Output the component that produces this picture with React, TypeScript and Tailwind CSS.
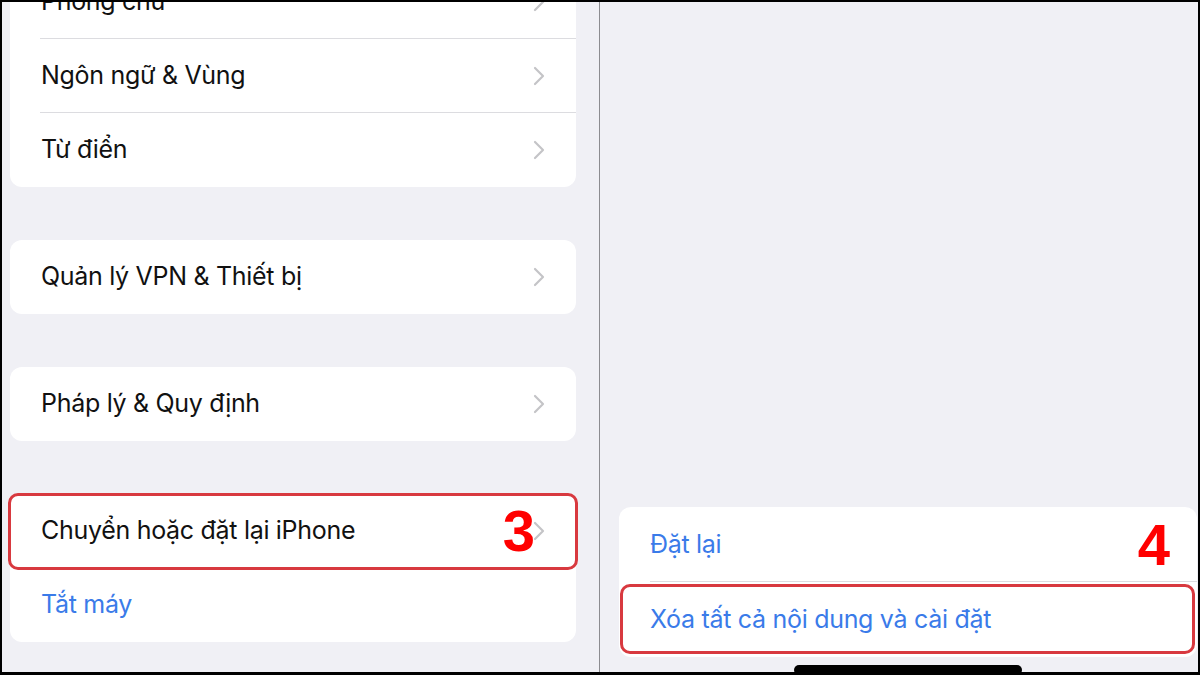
import React from "react";

const Chevron = () => (
  <svg width="12" height="20" viewBox="0 0 12 20" fill="none" className="shrink-0">
    <path d="M2 2L10 10L2 18" stroke="#c4c4c7" strokeWidth="2.2" strokeLinecap="round" strokeLinejoin="round" />
  </svg>
);

function Row({ label, blue, chevron = true, divider = false }: { label: string; blue?: boolean; chevron?: boolean; divider?: boolean }) {
  return (
    <div className="relative h-[74px] flex items-center pl-[31px] pr-[31px]">
      <span className={`text-[25px] tracking-[-0.3px] ${blue ? "text-[#3a7be9]" : "text-[#111]"} flex-1`}>{label}</span>
      {chevron && <Chevron />}
      {divider && <div className="absolute left-[30px] right-0 bottom-0 h-[1px] bg-[#dcdce0]" />}
    </div>
  );
}

const Mark = ({ n, right }: { n: string; right: string }) => (
  <span
    className={`absolute ${right} top-1/2 -translate-y-1/2 text-[58px] leading-none font-bold text-[#ff0000]`}
    style={{ fontFamily: '"Liberation Sans", Arial, sans-serif' }}
  >
    {n}
  </span>
);

export default function App() {
  return (
    <div
      className="w-[1200px] h-[675px] bg-black pt-[2px] pl-[2px] pr-[2px] pb-[3px] flex"
      style={{ fontFamily: 'Inter, "Noto Sans", sans-serif' }}
    >
      {/* left screen */}
      <div className="w-[597px] h-full bg-[#f0f0f5] overflow-hidden pl-[8px]">
        <div className="w-[566px] mt-[-37px] flex flex-col gap-[53px]">
          <div className="bg-white rounded-[12px]">
            <Row label="Phông chữ" divider />
            <Row label="Ngôn ngữ & Vùng" divider />
            <Row label="Từ điển" />
          </div>
          <div className="bg-white rounded-[12px]">
            <Row label="Quản lý VPN & Thiết bị" />
          </div>
          <div className="bg-white rounded-[12px]">
            <Row label="Pháp lý & Quy định" />
          </div>
          <div className="bg-white rounded-[12px]">
            <div className="relative">
              <Row label="Chuyển hoặc đặt lại iPhone" />
              <div className="absolute left-[-2px] right-[-2px] top-[-1px] bottom-[-2px] border-[3px] border-[#d8393f] rounded-[10px]" />
              <Mark n="3" right="right-[41px]" />
            </div>
            <Row label="Tắt máy" blue chevron={false} />
          </div>
        </div>
      </div>

      <div className="w-[1px] h-full bg-[#8c8c90]" />

      {/* right screen */}
      <div className="relative flex-1 h-full bg-[#f0f0f5] flex flex-col justify-end pl-[19px] pr-[1px] pb-[15px]">
        <div className="bg-white rounded-[12px]">
          <div className="relative h-[75px] flex items-center pl-[31px]">
            <span className="text-[25px] tracking-[-0.3px] text-[#3a7be9]">Đặt lại</span>
            <div className="absolute left-[31px] right-0 bottom-0 h-[1px] bg-[#dcdce0]" />
            <Mark n="4" right="right-[27px]" />
          </div>
          <div className="relative h-[75px] flex items-center pl-[31px]">
            <span className="text-[25px] tracking-[-0.3px] text-[#3a7be9]">Xóa tất cả nội dung và cài đặt</span>
            <div className="absolute left-[1px] right-[2px] top-[2px] bottom-[3px] border-[3px] border-[#d8393f] rounded-[10px]" />
          </div>
        </div>
        <div className="absolute left-[194px] bottom-[-3px] w-[228px] h-[10px] rounded-full bg-black" />
      </div>
    </div>
  );
}
